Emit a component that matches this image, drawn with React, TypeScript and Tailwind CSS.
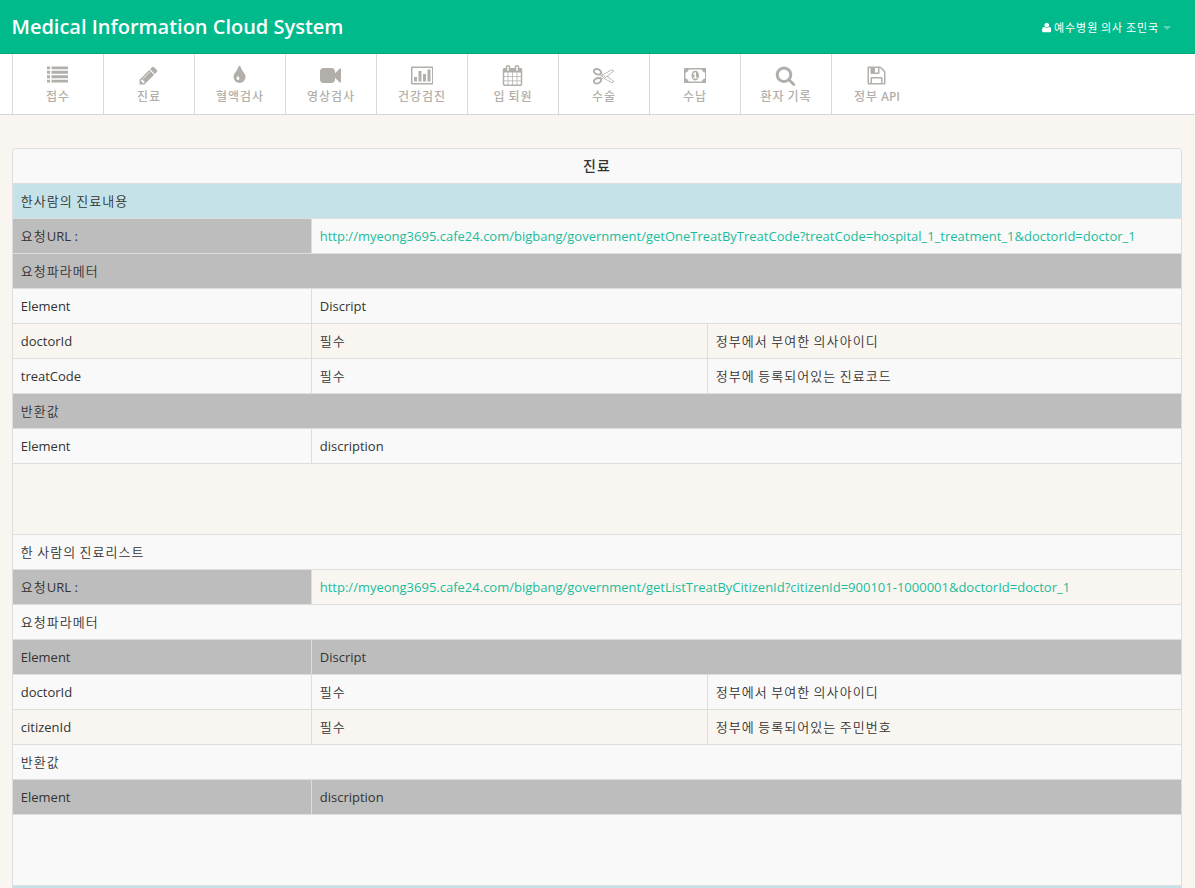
import React from "react";

const HANGUL = /([\uac00-\ud7a3]+)/;

/* Splits text so that hangul runs get slightly wider tracking than latin ones. */
function Text({ children, hangul = "tracking-[1.05px] font-[350]" }: { children: string; hangul?: string }) {
  return (
    <>
      {children.split(HANGUL).map((part, i) =>
        HANGUL.test(part) ? (
          <span key={i} className={hangul}>
            {part}
          </span>
        ) : (
          <span key={i}>{part}</span>
        )
      )}
    </>
  );
}

const icons: Record<string, React.ReactNode> = {
  list: (
    <path d="M0 120h256v240H0zM384 120h1408v240H384zM0 500h256v240H0zM384 500h1408v240H384zM0 880h256v240H0zM384 880h1408v240H384zM0 1260h256v240H0zM384 1260h1408v240H384z" />
  ),
  pencil: (
    <path d="M491 1536l91-91-235-235-91 91v107h128v128h107zm523-928q0-22-22-22-10 0-17 7l-542 542q-7 7-7 17 0 22 22 22 10 0 17-7l542-542q7-7 7-17zm-54-192l416 416-832 832h-416v-416zm683 96q0 53-37 90l-166 166-416-416 166-165q36-38 90-38 53 0 91 38l235 234q37 39 37 91z" />
  ),
  tint: (
    <path d="M896 1152q0-36-20-69-1-1-15.5-22.5t-25.5-38-25-44-21-50.5q-4-16-21-16t-21 16q-7 23-21 50.5t-25 44-25.5 38-15.5 22.5q-20 33-20 69 0 53 37.500 90.500t90.500 37.500 90.500-37.500 37.500-90.500zm512-128q0 212-150 362t-362 150-362-150-150-362q0-145 81-275 6-9 62.500-90.500t101-151 99.500-178 83-201.500q9-30 34-47t51-17 51.500 17 33.500 47q28 93 83 201.500t99.500 178 101 151 62.500 90.500q81 127 81 275z" />
  ),
  video: (
    <path d="M1792 352v1088q0 42-39 59-13 5-25 5-27 0-45-19l-403-403v166q0 119-84.500 203.500t-203.500 84.500h-704q-119 0-203.500-84.500t-84.500-203.500v-704q0-119 84.500-203.500t203.500-84.500h704q119 0 203.500 84.500t84.500 203.500v165l403-402q18-19 45-19 12 0 25 5 39 17 39 59z" />
  ),
  chart: (
    <path
      fillRule="evenodd"
      d="M96 128h1728q96 0 96 96v1344q0 96-96 96H96q-96 0-96-96V224q0-96 96-96zM160 256q-32 0-32 32v1216q0 32 32 32h1600q32 0 32-32V288q0-32-32-32zM256 1024h256v384H256zM640 512h256v896H640zM1024 768h256v640h-256zM1408 384h256v1024h-256z"
    />
  ),
  calendar: (
    <path d="M192 1664h288v-288h-288v288zm352 0h320v-288h-320v288zm-352-352h288v-320h-288v320zm352 0h320v-320h-320v320zm-352-384h288v-288h-288v288zm736 736h320v-288h-320v288zm-384-736h320v-288h-320v288zm768 736h288v-288h-288v288zm-384-352h320v-320h-320v320zm-352-864v-288q0-13-9.500-22.500t-22.500-9.500h-64q-13 0-22.500 9.500t-9.500 22.500v288q0 13 9.500 22.500t22.500 9.500h64q13 0 22.500-9.500t9.500-22.500zm736 864h288v-320h-288v320zm-384-384h320v-288h-320v288zm384 0h288v-288h-288v288zm32-480v-288q0-13-9.500-22.500t-22.500-9.500h-64q-13 0-22.500 9.500t-9.500 22.500v288q0 13 9.500 22.500t22.500 9.500h64q13 0 22.500-9.500t9.500-22.500zm384-64v1280q0 52-38 90t-90 38h-1408q-52 0-90-38t-38-90v-1280q0-52 38-90t90-38h128v-96q0-66 47-113t113-47h64q66 0 113 47t47 113v96h384v-96q0-66 47-113t113-47h64q66 0 113 47t47 113v96h128q52 0 90 38t38 90z" />
  ),
  cut: (
    <path d="M960 896q26 0 45 19t19 45-19 45-45 19-45-19-19-45 19-45 45-19zm300 64l507 398q28 20 25 56-5 35-35 51l-128 64q-13 7-29 7-17 0-31-8l-690-387-110 66q-8 4-12 5 14 49 10 97-7 77-56 147.500t-132 123.500q-132 84-277 84-136 0-222-78-90-84-79-207 7-76 56-147t131-124q132-84 278-84 83 0 151 31 9-13 22-22l122-73-122-73q-13-9-22-22-68 31-151 31-146 0-278-84-82-53-131-124t-56-147q-5-59 15.500-113t63.500-93q85-79 222-79 145 0 277 84 83 52 132 123t56 148q4 48-10 97 4 1 12 5l110 66 690-387q14-8 31-8 16 0 29 7l128 64q30 16 35 51 3 36-25 56zm-681-260q46-42 21-108t-106-117q-92-59-192-59-74 0-113 36-46 42-21 108t106 117q92 59 192 59 74 0 113-36zm-85 745q81-51 106-117t-21-108q-39-36-113-36-100 0-192 59-81 51-106 117t21 108q39 36 113 36 100 0 192-59zm178-613l96 58v-11q0-36 33-56l14-8-79-47-26 26q-3 3-10 11t-12 12q-2 2-4 3.500t-3 2.500zm224 224l96 32 736-576-128-64-768 431v113l-160 96 9 8q2 2 7 6 4 4 11 12t11 12l26 26zm704 416l128-64-520-408-177 138q-2 3-13 7z" />
  ),
  money: (
    <path d="M768 1152h384v-96h-128v-448h-114l-148 137 77 80q42-37 55-57h2v288h-128v96zm512-256q0 70-21 142t-59.500 134-101.500 101-138 39-138-39-101.500-101-59.500-134-21-142 21-142 59.500-134 101.500-101 138-39 138 39 101.500 101 59.500 134 21 142zm512 256v-512q-106 0-181-75t-75-181h-1152q0 106-75 181t-181 75v512q106 0 181 75t75 181h1152q0-106 75-181t181-75zm128-832v1152q0 26-19 45t-45 19h-1792q-26 0-45-19t-19-45v-1152q0-26 19-45t45-19h1792q26 0 45 19t19 45z" />
  ),
  search: (
    <path d="M1216 832q0-185-131.500-316.500t-316.500-131.500-316.500 131.500-131.500 316.500 131.500 316.500 316.500 131.500 316.500-131.500 131.500-316.500zm512 832q0 52-38 90t-90 38q-54 0-90-38l-343-342q-179 124-399 124-143 0-273.500-55.500t-225-150-150-225-55.500-273.500 55.500-273.500 150-225 225-150 273.500-55.500 273.500 55.500 225 150 150 225 55.500 273.500q0 220-124 399l343 343q37 37 37 90z" />
  ),
  save: (
    <path d="M512 1536h768v-384h-768v384zm896 0h128v-896q0-14-10-38.500t-20-34.500l-281-281q-10-10-34-20t-39-10v416q0 40-28 68t-68 28h-576q-40 0-68-28t-28-68v-416h-128v1280h128v-416q0-40 28-68t68-28h832q40 0 68 28t28 68v416zm-384-928v-320q0-13-9.500-22.500t-22.500-9.500h-192q-13 0-22.500 9.500t-9.500 22.500v320q0 13 9.500 22.500t22.500 9.500h192q13 0 22.500-9.500t9.500-22.500zm640 32v928q0 40-28 68t-68 28h-1344q-40 0-68-28t-28-68v-1344q0-40 28-68t68-28h928q40 0 88 20t76 48l280 280q28 28 48 76t20 88z" />
  ),
};

const nav: { icon: string; label: string; wide?: boolean }[] = [
  { icon: "list", label: "접수" },
  { icon: "pencil", label: "진료" },
  { icon: "tint", label: "혈액검사" },
  { icon: "video", label: "영상검사" },
  { icon: "chart", label: "건강검진", wide: true },
  { icon: "calendar", label: "입 퇴원" },
  { icon: "cut", label: "수술" },
  { icon: "money", label: "수납", wide: true },
  { icon: "search", label: "환자 기록" },
  { icon: "save", label: "정부 API" },
];

type Row = { cells: string[]; tone: "light" | "cream" | "gray" | "blue" | "urlLight" | "urlCream"; tall?: boolean };

const rows: Row[] = [
  { cells: ["한사람의 진료내용"], tone: "blue" },
  {
    cells: [
      "요청URL :",
      "http://myeong3695.cafe24.com/bigbang/government/getOneTreatByTreatCode?treatCode=hospital_1_treatment_1&doctorId=doctor_1",
    ],
    tone: "urlLight",
  },
  { cells: ["요청파라메터"], tone: "gray" },
  { cells: ["Element", "Discript"], tone: "light" },
  { cells: ["doctorId", "필수", "정부에서 부여한 의사아이디"], tone: "cream" },
  { cells: ["treatCode", "필수", "정부에 등록되어있는 진료코드"], tone: "light" },
  { cells: ["반환값"], tone: "gray" },
  { cells: ["Element", "discription"], tone: "light" },
  { cells: [""], tone: "cream", tall: true },
  { cells: ["한 사람의 진료리스트"], tone: "light" },
  {
    cells: [
      "요청URL :",
      "http://myeong3695.cafe24.com/bigbang/government/getListTreatByCitizenId?citizenId=900101-1000001&doctorId=doctor_1",
    ],
    tone: "urlCream",
  },
  { cells: ["요청파라메터"], tone: "light" },
  { cells: ["Element", "Discript"], tone: "gray" },
  { cells: ["doctorId", "필수", "정부에서 부여한 의사아이디"], tone: "light" },
  { cells: ["citizenId", "필수", "정부에 등록되어있는 주민번호"], tone: "cream" },
  { cells: ["반환값"], tone: "light" },
  { cells: ["Element", "discription"], tone: "gray" },
  { cells: [""], tone: "light", tall: true },
  { cells: [""], tone: "blue" },
];

const tones = {
  light: "bg-[#f9f9f9]",
  cream: "bg-[#f9f6f1]",
  gray: "bg-[#bdbdbd]",
  blue: "bg-[#c4e2e7]",
  urlLight: "bg-[#f9f9f9]",
  urlCream: "bg-[#f9f6f1]",
};

function TableRow({ row }: { row: Row }) {
  const isUrl = row.tone === "urlLight" || row.tone === "urlCream";
  return (
    <div className={`flex shrink-0 border-t border-[#dddddd] ${row.tall ? "h-[71px]" : "h-[35px]"} ${tones[row.tone]}`}>
      {row.cells.map((cell, i) => {
        const last = i === row.cells.length - 1;
        const width = last ? "grow" : i === 0 ? "w-[298px]" : "w-[396px]";
        return (
          <div
            key={i}
            className={`flex shrink-0 items-center whitespace-nowrap pl-[7.75px] ${width} ${i > 0 ? "border-l border-[#dddddd]" : ""} ${
              isUrl && i === 0 ? "bg-[#bdbdbd]" : ""
            }`}
          >
            {isUrl && i === 1 ? (
              <a className="text-[#1abc9c]">{cell}</a>
            ) : (
              <span className="whitespace-pre">
                <Text>{cell}</Text>
              </span>
            )}
          </div>
        );
      })}
    </div>
  );
}

export default function App() {
  return (
    <div className="flex h-[888px] flex-col overflow-hidden bg-[#f9f6f1] font-['Open_Sans','Noto_Sans_CJK_KR',sans-serif] text-[13px] leading-[18px] text-[#333333]">
      <header className="flex h-[54px] shrink-0 items-center justify-between border-b border-[#00a67c] bg-[#00ba8b] pl-[11.5px] pr-[24px] text-white">
        <h1 className="text-[20px] font-semibold leading-5 tracking-[-0.01px]">Medical Information Cloud System</h1>
        <div className="flex items-center pt-0.5 text-[11px]">
          <svg viewBox="0 0 1536 1792" className="mr-[3px] h-[11px] w-[9.5px] fill-white">
            <path d="M1536 1399q0 109-62.500 187t-150.500 78h-1110q-88 0-150.500-78t-62.500-187q0-85 8.500-160.500t31.500-152 58.500-131 94-89 134.500-34.500q131 128 441 128t441-128q76 0 134.500 34.500t94 89 58.500 131 31.500 152 8.500 160.500zM1152 512q0 159-112.500 271.500t-271.500 112.500-271.500-112.500-112.500-271.500 112.500-271.500 271.500-112.500 271.500 112.500 112.500 271.500z" />
          </svg>
          <span className="whitespace-pre">
            <Text hangul="tracking-[0.9px]">예수병원 의사 조민국</Text>
          </span>
          <span className="ml-1 size-0 border-x-4 border-t-4 border-x-transparent border-t-white/35" />
        </div>
      </header>
      <nav className="flex h-[61px] shrink-0 border-b border-[#d6d6d6] bg-white pl-3">
        {nav.map((item) => (
          <a key={item.label} className="flex w-[91px] flex-col items-center border-l border-[#d9d9d9] pt-[10.500px] text-[#b2afaa]">
            <svg
              viewBox={item.wide ? "0 0 1920 1792" : "0 0 1792 1792"}
              className={`h-[21px] fill-[#b2afaa] ${item.wide ? "w-[22.5px]" : "mr-px w-[21px]"}`}
            >
              {icons[item.icon]}
            </svg>
            <span className="whitespace-pre text-[12px] font-semibold leading-[22px]">
              <Text hangul="tracking-[0.9px] font-medium">{item.label}</Text>
            </span>
          </a>
        ))}
      </nav>
      <main className="mx-3 mt-[33px] flex w-[1170px] shrink-0 flex-col overflow-hidden rounded-t border-x border-t border-[#dddddd]">
        <div className="flex h-[34px] shrink-0 items-center justify-center bg-[#f9f9f9] text-[14px]">
          <Text hangul="tracking-[1px] font-medium">진료</Text>
        </div>
        {rows.map((row, i) => (
          <TableRow key={i} row={row} />
        ))}
      </main>
    </div>
  );
}
